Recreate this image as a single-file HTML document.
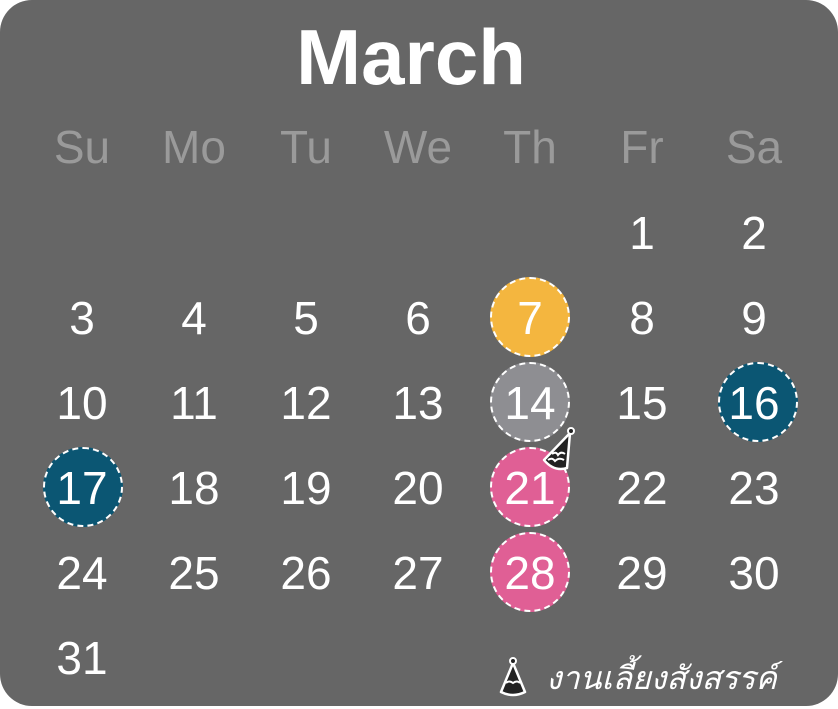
<!DOCTYPE html>
<html><head><meta charset="utf-8"><style>
body{margin:0;width:838px;height:709px;background:#fff;overflow:hidden;font-family:"Liberation Sans","DejaVu Sans",sans-serif}
.cal{position:absolute;left:0;top:0;width:838px;height:706px;background:#666;border-radius:32px}
.t{position:absolute;left:-8px;width:838px;top:12px;text-align:center;color:#fff;font-weight:bold;font-size:78px;line-height:90px}
.h,.d{position:absolute;width:100px;margin-left:-50px;text-align:center}
.h{color:#9a9a9a;font-size:46px;line-height:50px}
.d{color:#fff;font-size:46px;line-height:50px}
.c{position:absolute;width:76px;height:76px;border-radius:50%;border:2px dashed #fff;margin-left:-40px;margin-top:-40px}
.leg{position:absolute;left:546px;top:656px;color:#fff;font-style:italic;font-size:32px;line-height:44px}
</style></head><body>
<div class="cal">
<div class="t">March</div>
<div class="c" style="left:530px;top:317px;background:#f4b63f"></div>
<div class="c" style="left:530px;top:402px;background:#8e8e92"></div>
<div class="c" style="left:758px;top:402px;background:#0b5673"></div>
<div class="c" style="left:83px;top:487px;background:#0b5673"></div>
<div class="c" style="left:530px;top:487px;background:#e05f95"></div>
<div class="c" style="left:530px;top:572px;background:#e05f95"></div>
<div id="g"></div>
<svg style="position:absolute;left:536px;top:424px" width="46" height="50" viewBox="0 0 46 50">
<path d="M34 9 L8 36 Q18 48 31 44 Z" fill="#222" stroke="#fff" stroke-width="2.5" stroke-linejoin="round"/>
<path d="M16 30 q4 -3 6 1 q3 -4 7 -1 M12 36 q4 -3 7 1 q4 -4 9 -1" fill="none" stroke="#fff" stroke-width="2"/>
<circle cx="35" cy="7" r="3" fill="#222" stroke="#fff" stroke-width="2"/>
</svg>
<svg style="position:absolute;left:497px;top:656px" width="32" height="42" viewBox="0 0 32 42">
<path d="M16 7 L4 36 Q16 42 28 36 Z" fill="#222" stroke="#fff" stroke-width="2.5" stroke-linejoin="round"/>
<path d="M9 27 q3 -3 7 0 q4 -3 7 0" fill="none" stroke="#fff" stroke-width="2"/>
<circle cx="16" cy="5" r="3" fill="#222" stroke="#fff" stroke-width="2"/>
</svg>
<div class="leg">งานเลี้ยงสังสรรค์</div>
</div>
<script>
var x=[82,194,306,418,530,642,754],g=document.getElementById('g'),s='';
['Su','Mo','Tu','We','Th','Fr','Sa'].forEach(function(n,i){s+='<div class="h" style="left:'+x[i]+'px;top:122px">'+n+'</div>'});
for(var d=1;d<=31;d++){var p=d+4,c=p%7,r=Math.floor(p/7);s+='<div class="d" style="left:'+x[c]+'px;top:'+(208+r*85)+'px">'+d+'</div>'}
g.innerHTML=s;
</script>
</body></html>
